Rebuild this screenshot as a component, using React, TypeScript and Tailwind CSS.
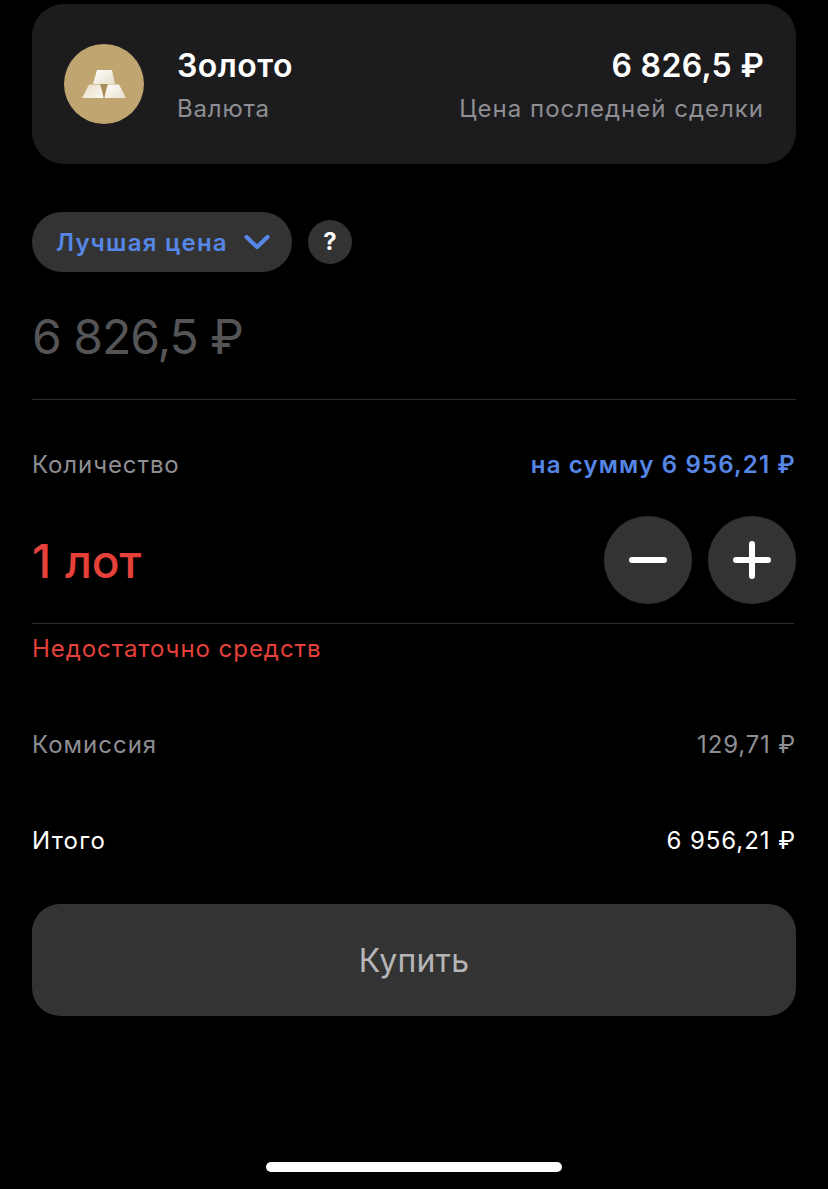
import React from "react";

function GoldIcon() {
  return (
    <svg width="44" height="28" viewBox="0 0 44 28" className="block">
      <defs>
        <linearGradient id="g1" x1="0" y1="0" x2="1" y2="1">
          <stop offset="0" stopColor="#ffffff" />
          <stop offset="1" stopColor="#e8dfcb" />
        </linearGradient>
        <linearGradient id="g2" x1="0" y1="0" x2="1" y2="1">
          <stop offset="0" stopColor="#e6dcc7" />
          <stop offset="1" stopColor="#fbf8f1" />
        </linearGradient>
      </defs>
      <path d="M15 0H30L33 14H11Z" fill="url(#g1)" />
      <path d="M7 14.5H19L21.5 28H0Z" fill="url(#g2)" />
      <path d="M25 14.5H37L44 28H22.5Z" fill="url(#g1)" />
      <path d="M18 14H26L22 27Z" fill="#a88f58" />
    </svg>
  );
}

export default function App() {
  return (
    <div className="w-[828px] h-[1189px] bg-black flex flex-col pt-1 px-8 overflow-hidden font-['Inter','Liberation_Sans',sans-serif]">
      <div className="h-40 shrink-0 rounded-[32px] bg-[#1c1c1e] flex items-center pl-8 pr-8">
        <div className="w-20 h-20 rounded-full bg-[#c0a570] flex items-center justify-center">
          <GoldIcon />
        </div>
        <div className="ml-[33px] flex flex-col">
          <div className="text-[32px] leading-[44px] font-semibold text-white tracking-[0.5px]">Золото</div>
          <div className="text-[24px] leading-[32px] text-[#8e8e93] mt-[5px] tracking-[0.8px]">Валюта</div>
        </div>
        <div className="ml-auto flex flex-col items-end">
          <div className="text-[32px] leading-[44px] font-semibold text-white tracking-[0.3px]">6 826,5 ₽</div>
          <div className="text-[24px] leading-[32px] text-[#8e8e93] mt-[5px] tracking-[1px]">Цена последней сделки</div>
        </div>
      </div>

      <div className="mt-12 flex items-center gap-4">
        <div className="h-[60px] w-[260px] rounded-full bg-[#333333] flex items-center pl-6 pr-[22px] justify-between">
          <span className="pt-0.5 text-[24px] font-semibold text-[#5686e6] tracking-[1.25px]">Лучшая цена</span>
          <svg width="26" height="16" viewBox="0 0 26 16" fill="none" stroke="#5686e6" strokeWidth="4.2" strokeLinecap="round" strokeLinejoin="round">
            <path d="M2.5 3L13 13L23.5 3" />
          </svg>
        </div>
        <div className="w-11 h-11 rounded-full bg-[#333333] flex items-center justify-center text-white text-[24px] font-bold">?</div>
      </div>

      <div className="mt-[34px] text-[48px] leading-[62px] text-[#555557] tracking-[-1px]">6 826,5 ₽</div>
      <div className="mt-[31px] h-px bg-[#2e2e30]" />

      <div className="mt-[49px] flex items-center justify-between h-8">
        <span className="text-[24px] text-[#8e8e93] tracking-[0.9px]">Количество</span>
        <span className="text-[24px] font-semibold text-[#5686e6] tracking-[1.15px]">на сумму 6 956,21 ₽</span>
      </div>

      <div className="mt-[35px] flex items-center justify-between h-[88px]">
        <span className="pt-0.5 text-[46px] font-medium text-[#e5413a] tracking-[-0.2px] [word-spacing:2px]">1 лот</span>
        <div className="flex gap-4">
          <div className="w-[88px] h-[88px] rounded-full bg-[#333333] flex items-center justify-center">
            <svg width="40" height="8" viewBox="0 0 40 8"><rect x="1" y="1" width="38" height="6" rx="3" fill="#fff" /></svg>
          </div>
          <div className="w-[88px] h-[88px] rounded-full bg-[#333333] flex items-center justify-center">
            <svg width="40" height="40" viewBox="0 0 40 40">
              <rect x="1" y="17" width="38" height="6" rx="3" fill="#fff" />
              <rect x="17" y="1" width="6" height="38" rx="3" fill="#fff" />
            </svg>
          </div>
        </div>
      </div>

      <div className="mt-[19px] h-px w-[762px] bg-[#2e2e30]" />
      <div className="mt-[9px] h-8 text-[24px] leading-8 text-[#e5413a] tracking-[0.95px]">Недостаточно средств</div>

      <div className="mt-16 h-8 flex items-center justify-between text-[24px] text-[#8e8e93]">
        <span className="tracking-[1px]">Комиссия</span>
        <span className="tracking-[0.85px]">129,71 ₽</span>
      </div>
      <div className="mt-16 h-8 flex items-center justify-between text-[24px] text-white">
        <span className="tracking-[1.2px]">Итого</span>
        <span className="tracking-[0.95px]">6 956,21 ₽</span>
      </div>

      <div className="mt-[47px] h-28 shrink-0 rounded-[28px] bg-[#333333] flex items-center justify-center text-[32px] text-[#b5b5b7] tracking-[0.2px]">
        <span className="pt-0.5">Купить</span>
      </div>

      <div className="mt-[146px] mx-auto w-[296px] h-2.5 rounded-full bg-white" />
    </div>
  );
}
